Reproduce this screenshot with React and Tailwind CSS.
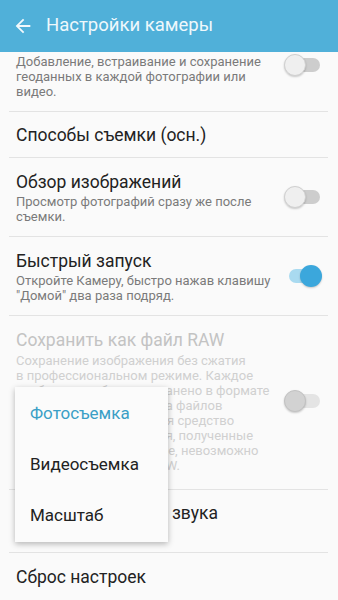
import React from 'react';

const Toggle = ({ on = false, disabled = false }) => {
  const track = on ? 'bg-[#a9daf0]' : disabled ? 'bg-[#e4e4e4]' : 'bg-[#cdcdcd]';
  const thumb = on
    ? 'left-[15px] bg-[#3ba7dc]'
    : disabled
    ? 'left-0 bg-[#d2d2d2] border border-[#c2c2c2]'
    : 'left-0 bg-[#efefef] border border-[#d0d0d0]';
  return (
    <div className="relative w-[37px] h-[22px] shrink-0">
      <div className={`absolute left-[4px] right-[1px] top-[4px] h-[14px] rounded-full ${track}`} />
      <div className={`absolute top-0 w-[22px] h-[22px] rounded-full shadow-[0_1px_2px_rgba(0,0,0,0.2)] ${thumb}`} />
    </div>
  );
};

const Divider = () => <div className="h-px bg-[#e3e3e3] ml-[9px] mr-[10px]" />;

const App = () => {
  const rawLines = [
    'Сохранение изображения без сжатия',
    'в профессиональном режиме. Каждое',
    'изображение будет сохранено в формате',
    'JPEG и RAW. Для разбора файлов',
    'RAW требуется отдельная средство',
    'просмотра. Изображения, полученные',
    'при съемке в том режиме, невозможно',
    'сохранить в формате RAW.',
  ];

  return (
    <div
      className="relative w-[338px] h-[600px] overflow-hidden bg-[#fafafa]"
      style={{ fontFamily: 'Roboto, "Noto Sans", sans-serif' }}
    >
      {/* Header */}
      <div className="relative z-10 h-[52px] bg-[#50b0d9] flex items-center">
        <svg className="ml-[12px]" width="22" height="22" viewBox="0 0 24 24" fill="#f2f9fc">
          <path d="M20 11H7.83l5.59-5.59L12 4l-8 8 8 8 1.41-1.41L7.83 13H20v-2z" />
        </svg>
        <span className="ml-[12px] text-[18.5px] text-[#eef8fc]">Настройки камеры</span>
      </div>

      <div className="-mt-[34px]">
        {/* Geotag (scrolled under header) */}
        <div className="flex items-center pl-[16px] pr-[17px] pt-[12px] pb-[12px]">
          <div className="flex-1">
            <div className="text-[17.5px] leading-[24px] text-[#222]">Геотеги</div>
            <div className="text-[13px] leading-[15px] text-[#7a7a7a]">
              Добавление, встраивание и сохранение
              <br />
              геоданных в каждой фотографии или
              <br />
              видео.
            </div>
          </div>
          <Toggle />
        </div>
        <Divider />

        <div className="pl-[16px] py-[10.5px] text-[17.5px] leading-[24px] text-[#222]">Способы съемки (осн.)</div>
        <Divider />

        <div className="flex items-center pl-[16px] pr-[17px] pt-[12px] pb-[12px]">
          <div className="flex-1">
            <div className="text-[17.5px] leading-[24px] text-[#222]">Обзор изображений</div>
            <div className="text-[13px] leading-[15px] text-[#7a7a7a]">
              Просмотр фотографий сразу же после
              <br />
              съемки.
            </div>
          </div>
          <Toggle />
        </div>
        <Divider />

        <div className="flex items-center pl-[16px] pr-[16px] pt-[12px] pb-[12px]">
          <div className="flex-1">
            <div className="text-[17.5px] leading-[24px] text-[#222]">Быстрый запуск</div>
            <div className="text-[13px] leading-[15px] text-[#7a7a7a]">
              Откройте Камеру, быстро нажав клавишу
              <br />
              "Домой" два раза подряд.
            </div>
          </div>
          <Toggle on />
        </div>
        <Divider />

        <div className="flex items-center pl-[16px] pr-[17px] pt-[12px] pb-[16px]">
          <div className="flex-1">
            <div className="text-[17.5px] leading-[24px] text-[#c3c3c3]">Сохранить как файл RAW</div>
            <div className="mt-[1px] text-[13px] leading-[15px] text-[#d0d0d0] whitespace-nowrap">
              {rawLines.map((l) => (
                <div key={l}>{l}</div>
              ))}
            </div>
          </div>
          <Toggle disabled />
        </div>
        <Divider />

        <div className="pl-[16px] pt-[11px] pb-[12px]">
          <div className="text-[17.5px] leading-[24px] text-[#222]">Кнопка громкости звука</div>
          <div className="text-[13px] leading-[15px] text-[#3a9fc6]">Фотосъемка</div>
        </div>
        <Divider />

        <div className="pl-[16px] pt-[12px] pb-[10px] text-[17.5px] leading-[24px] text-[#222]">Сброс настроек</div>
      </div>

      {/* Volume key popup menu */}
      <div className="absolute left-[15px] top-[387px] w-[153px] py-[1px] bg-[#fbfbfb] shadow-[0_2px_6px_rgba(0,0,0,0.28)] z-20">
        <div className="h-[51px] flex items-center pl-[15px] text-[17px] text-[#3a9fc6]">Фотосъемка</div>
        <div className="h-[51px] flex items-center pl-[15px] text-[17px] text-[#222]">Видеосъемка</div>
        <div className="h-[51px] flex items-center pl-[15px] text-[17px] text-[#222]">Масштаб</div>
      </div>
    </div>
  );
};

export default App;
